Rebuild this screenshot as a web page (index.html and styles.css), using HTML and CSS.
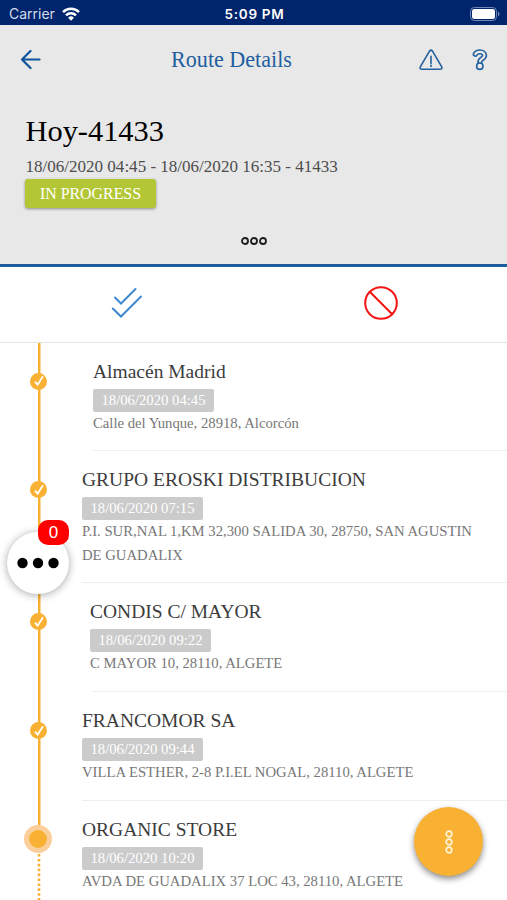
FILE: index.html
```html
<!DOCTYPE html>
<html lang="en">
<head>
  <meta charset="UTF-8">
  <meta name="viewport" content="width=device-width, initial-scale=1">
  <title>Route Details</title>
  <link rel="stylesheet" href="styles.css">
</head>
<body>

<div class="status-bar">
  <div class="carrier">
    <span>Carrier</span>
    <svg width="18" height="14" viewBox="0 0 18 14" fill="none" stroke="#fff" stroke-width="2.5">
      <path d="M1 5.1a11.5 11.5 0 0 1 16 0"/>
      <path d="M4 8.3a7.2 7.2 0 0 1 10 0"/>
      <path d="M9 13.7L6.1 10.7a4.2 4.2 0 0 1 5.8 0z" fill="#fff" stroke="none"/>
    </svg>
  </div>
  <div class="clock">5:09 PM</div>
  <svg class="battery" width="30" height="14" viewBox="0 0 30 14">
    <rect x="0.5" y="0.5" width="26" height="13" rx="3.8" fill="none" stroke="#7388b7"/>
    <rect x="2" y="2" width="23" height="10" rx="2.3" fill="#fff"/>
    <path d="M28 4.5c2 .8 2 4.2 0 5z" fill="#7388b7"/>
  </svg>
</div>

<header class="header">
  <div class="nav">
    <svg class="back" width="21" height="20" viewBox="0 0 21 20">
      <path d="M19.500 9.500H2M10.500 1L2 9.500l8.500 8.500"/>
    </svg>
    <h1>Route Details</h1>
    <div class="nav-icons">
      <svg width="24" height="22" viewBox="0 0 24 22">
        <path d="M10.500 2.200Q12 0 13.500 2.200L22.600 17.700Q23.700 20.300 21 20.300H3Q.3 20.300 1.400 17.700Z"/>
        <path d="M12 7.200v7.300M12 16.200v1.300"/>
      </svg>
      <svg width="16" height="22" viewBox="0 0 16 22">
        <path class="hook" d="M3.300 5.200C4.200 3.500 5.900 2.900 7.800 2.900c2.800 0 4.700 1.500 4.700 3.700 0 3.100-4.600 3.100-4.600 6.200"/>
        <path class="hook-inner" d="M3.300 5.200C4.200 3.500 5.900 2.900 7.800 2.900c2.800 0 4.700 1.500 4.700 3.700 0 3.100-4.600 3.100-4.600 6.200"/>
        <circle class="hook-dot" cx="7.800" cy="17.200" r="3.200"/>
      </svg>
    </div>
  </div>

  <h2>Hoy-41433</h2>
  <p class="route-info">18/06/2020 04:45 - 18/06/2020 16:35 - 41433</p>
  <span class="route-state">IN PROGRESS</span>

  <svg class="more" width="28" height="10" viewBox="0 0 28 10">
    <circle cx="5" cy="5" r="3"/>
    <circle cx="14" cy="5" r="3"/>
    <circle cx="23" cy="5" r="3"/>
  </svg>
</header>

<div class="actions">
  <div class="action">
    <svg width="32" height="32" viewBox="0 0 32 32" stroke="#3f87d0">
      <path d="M4 11.500l6 6L24.500 3M1.800 22.500l8.200 8L30 10.500"/>
    </svg>
  </div>
  <div class="action">
    <svg width="36" height="36" viewBox="0 0 36 36" stroke="#f41414">
      <circle cx="18" cy="18" r="15.800"/>
      <path d="M6.800 6.800l22.400 22.400"/>
    </svg>
  </div>
</div>

<main class="stops">
  <div class="stop inset">
    <div class="track"><span class="dot"><svg width="12" height="12" viewBox="0 0 12 12"><path d="M2 6.700l2.600 3L10 1.300"/></svg></span></div>
    <div class="stop-body">
      <h3>Almacén Madrid</h3>
      <span class="time">18/06/2020 04:45</span>
      <p>Calle del Yunque, 28918, Alcorcón</p>
    </div>
  </div>

  <div class="stop">
    <div class="track"><span class="dot"><svg width="12" height="12" viewBox="0 0 12 12"><path d="M2 6.700l2.600 3L10 1.300"/></svg></span></div>
    <div class="stop-body">
      <h3>GRUPO EROSKI DISTRIBUCION</h3>
      <span class="time">18/06/2020 07:15</span>
      <p>P.I. SUR,NAL 1,KM 32,300 SALIDA 30, 28750, SAN AGUSTIN<br>DE GUADALIX</p>
    </div>
  </div>

  <div class="stop nudged">
    <div class="track"><span class="dot"><svg width="12" height="12" viewBox="0 0 12 12"><path d="M2 6.700l2.600 3L10 1.300"/></svg></span></div>
    <div class="stop-body">
      <h3>CONDIS C/ MAYOR</h3>
      <span class="time">18/06/2020 09:22</span>
      <p>C MAYOR 10, 28110, ALGETE</p>
    </div>
  </div>

  <div class="stop">
    <div class="track"><span class="dot"><svg width="12" height="12" viewBox="0 0 12 12"><path d="M2 6.700l2.600 3L10 1.300"/></svg></span></div>
    <div class="stop-body">
      <h3>FRANCOMOR SA</h3>
      <span class="time">18/06/2020 09:44</span>
      <p>VILLA ESTHER, 2-8 P.I.EL NOGAL, 28110, ALGETE</p>
    </div>
  </div>

  <div class="stop current">
    <div class="track">
      <span class="dot"></span>
      <svg class="pending" width="4" height="46" viewBox="0 0 4 46"><path d="M2 0v46"/></svg>
    </div>
    <div class="stop-body">
      <h3>ORGANIC STORE</h3>
      <span class="time">18/06/2020 10:20</span>
      <p>AVDA DE GUADALIX 37 LOC 43, 28110, ALGETE</p>
    </div>
  </div>
</main>

<!-- floating buttons -->
<div class="chat">
  <svg width="42" height="12" viewBox="0 0 42 12">
    <circle cx="5.500" cy="6" r="5.200"/>
    <circle cx="21" cy="6" r="5.200"/>
    <circle cx="36.500" cy="6" r="5.200"/>
  </svg>
  <span class="chat-count">0</span>
</div>

<div class="fab">
  <svg width="10" height="26" viewBox="0 0 10 26">
    <circle cx="5" cy="5" r="2.800"/>
    <circle cx="5" cy="13" r="2.800"/>
    <circle cx="5" cy="21" r="2.800"/>
  </svg>
</div>

</body>
</html>
```

FILE: styles.css
```css
* {
  box-sizing: border-box;
}

body {
  margin: 0;
  height: 900px;
  overflow: hidden;
  position: relative;
  background: #fff;
  font-family: "Liberation Serif", "Times New Roman", serif;
}

h1, h2, h3, p {
  margin: 0;
  font-weight: normal;
}

svg {
  display: block;
}

/* status bar */
.status-bar {
  height: 25px;
  padding: 2px 7px 0 9px;
  display: grid;
  grid-template-columns: 1fr auto 1fr;
  align-items: center;
  background: #00256c;
  color: #fff;
  font-family: Inter, sans-serif;
  font-size: 14px;
}

.carrier {
  display: flex;
  align-items: center;
  gap: 7px;
  color: #d5dced;
}

.clock {
  font-weight: 600;
  font-size: 13.5px;
  letter-spacing: 0.7px;
}

.battery {
  justify-self: end;
}

/* header */
.header {
  height: 242px;
  padding: 0 19px 0 25px;
  background: #e8e8e8;
  border-bottom: 3px solid #1d5c9f;
}

.nav {
  height: 69px;
  margin-left: -5px;
  display: grid;
  grid-template-columns: 1fr auto 1fr;
  align-items: center;
}

.nav svg {
  fill: none;
  stroke: #23609f;
  stroke-width: 1.6;
  stroke-linecap: round;
  stroke-linejoin: round;
}

.nav .back {
  stroke: #0f539b;
  stroke-width: 2.2;
}

.nav h1 {
  font-size: 22.1px;
  color: #1f5e9f;
  padding-right: 44px;
  margin-right: -44px;
  transform: translateX(-22.5px);
}

.nav-icons {
  display: flex;
  justify-content: flex-end;
  gap: 29px;
}

.nav .hook {
  stroke-width: 5.4;
}

.nav .hook-inner {
  stroke: #e8e8e8;
  stroke-width: 2.2;
}

.nav .hook-dot {
  fill: #e8e8e8;
}

.header h2 {
  margin: 19px 0 0 0.5px;
  font-size: 30.4px;
  line-height: 36px;
  color: #000;
}

.route-info {
  margin: 8px 0 0 0.5px;
  font-size: 17.05px;
  line-height: 20px;
  color: #4d4d4d;
}

.route-state {
  display: block;
  width: 131px;
  height: 29px;
  margin-top: 2px;
  border-radius: 3px;
  background: #b3c736;
  box-shadow: 0 1px 3px rgba(0, 0, 0, 0.4);
  color: #fff;
  font-size: 15.9px;
  line-height: 29px;
  text-align: center;
}

.more {
  margin: 28px 0 0 214.5px;
  fill: none;
  stroke: #1d1d1d;
  stroke-width: 1.8;
}

/* accept / reject */
.actions {
  height: 75.5px;
  padding-bottom: 2.5px;
  display: grid;
  grid-template-columns: 1fr 1fr;
  border-bottom: 1px solid #e4e4e4;
}

.action {
  display: flex;
  align-items: center;
  justify-content: center;
}

.action svg {
  fill: none;
  stroke-width: 2;
  stroke-linecap: round;
}

.action:first-child svg {
  margin-top: -2px;
}

.action:last-child {
  padding-left: 2px;
}

/* route stops */
.stop {
  display: flex;
}

.track {
  width: 82px;
  flex: none;
  padding: 30px 0 0 30px;
  background: linear-gradient(#f8b133, #f8b133) 37.5px 0 / 2.5px 100% no-repeat;
}

.dot {
  display: flex;
  width: 17px;
  height: 17px;
  align-items: center;
  justify-content: center;
  border-radius: 50%;
  background: #f8b133;
}

.dot svg {
  fill: none;
  stroke: #fff;
  stroke-width: 1.8;
}

.stop-body {
  flex: 1;
  padding: 17px 0 15.6px;
  border-bottom: 1px solid #eee;
}

.inset .track {
  width: 93px;
}

/* text starts slightly left of its divider */
.nudged .track {
  width: 92px;
}

.nudged .stop-body > * {
  margin-left: -2px;
}

.stop h3 {
  font-size: 19.5px;
  line-height: 23px;
  color: #3c3c3c;
}

.time {
  display: block;
  width: 121px;
  height: 23px;
  margin-top: 6px;
  border-radius: 2px;
  background: #cbcbcb;
  color: #fff;
  font-size: 14.7px;
  line-height: 23px;
  text-align: center;
}

.stop p {
  font-size: 14.7px;
  line-height: 23.2px;
  color: #777;
}

.current .track {
  padding: 24px 0 0 24px;
  background-size: 2.5px 30px;
}

.current .dot {
  width: 28px;
  height: 28px;
  border: 5px solid #fbcf9c;
}

.pending {
  margin: 1px 0 0 13px;
  stroke: #f8b133;
  stroke-width: 2.6;
  stroke-dasharray: 2.6 2.3;
}

/* floating buttons */
.chat,
.fab {
  position: absolute;
  display: flex;
  align-items: center;
  justify-content: center;
  border-radius: 50%;
}

.chat {
  left: 7px;
  top: 532px;
  width: 62px;
  height: 62px;
  background: #fff;
  box-shadow: 0 1px 8px rgba(0, 0, 0, 0.35);
}

.chat-count {
  position: absolute;
  top: -12px;
  right: 0;
  width: 31px;
  height: 25px;
  border-radius: 10px;
  background: #f00;
  color: #fff;
  font-family: "Liberation Sans", Arial, sans-serif;
  font-size: 17px;
  line-height: 26px;
  text-align: center;
}

.fab {
  left: 414px;
  top: 807px;
  width: 69px;
  height: 69px;
  background: #f8b133;
  box-shadow: 0 3px 6px rgba(0, 0, 0, 0.45);
}

.fab svg {
  fill: none;
  stroke: #fff5d8;
  stroke-width: 1.7;
}
```
